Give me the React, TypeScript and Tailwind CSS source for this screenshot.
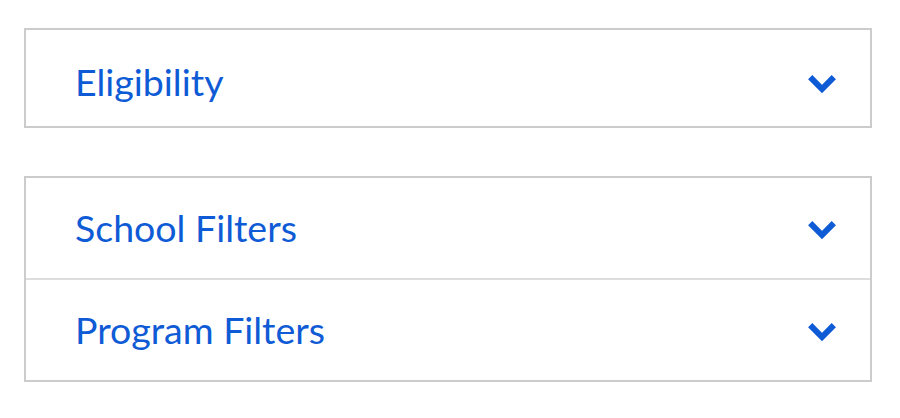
import React from "react";

function Chevron() {
  return (
    <svg width="30" height="20" viewBox="0 0 30 20" className="mt-[4px] shrink-0">
      <path d="M3.2 3.2 L15 15 L26.8 3.2" fill="none" stroke="#0f5bd6" strokeWidth="6" strokeLinejoin="miter" />
    </svg>
  );
}

function Row({ label, className }: { label: string; className?: string }) {
  return (
    <button
      className={
        "flex w-full items-center justify-between pl-[49px] pr-[33px] text-left " + (className ?? "")
      }
    >
      <span className="text-[37.5px] leading-none text-[#0f5bd6]">{label}</span>
      <Chevron />
    </button>
  );
}

export default function App() {
  return (
    <div className="min-h-[418px] bg-white px-[24px] pt-[28px] font-['Lato','Open_Sans',sans-serif]">
      <div className="w-[848px]">
        <div className="border-2 border-[#cccccc]">
          <Row label="Eligibility" className="h-[96px] pt-[8px]" />
        </div>
        <div className="mt-[48px] border-2 border-[#cccccc]">
          <Row label="School Filters" className="h-[102px] border-b-2 border-[#dddddd]" />
          <Row label="Program Filters" className="h-[100px]" />
        </div>
      </div>
    </div>
  );
}
